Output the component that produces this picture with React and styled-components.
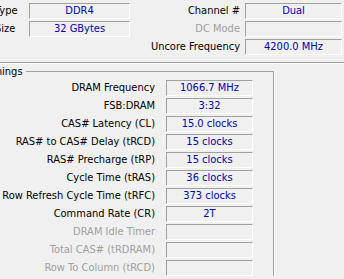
import styled, { createGlobalStyle } from "styled-components"

const GlobalStyle = createGlobalStyle`
    html, body {
        margin: 0;
        padding: 0;
        background: #f0f0f0;
        overflow: hidden;
    }
    body {
        font-family: "DejaVu Sans Condensed", "DejaVu Sans", sans-serif;
        font-stretch: condensed;
        font-size: 11px;
        color: #000000;
    }
`

const general = [
    { label: "Type", value: "DDR4", rightLabel: "Channel #", rightValue: "Dual" },
    { label: "Size", value: "32 GBytes", rightLabel: "DC Mode", rightValue: "", rightDisabled: true },
    { label: "", value: null, rightLabel: "Uncore Frequency", rightValue: "4200.0 MHz" },
]

const timings = [
    { label: "DRAM Frequency", value: "1066.7 MHz" },
    { label: "FSB:DRAM", value: "3:32" },
    { label: "CAS# Latency (CL)", value: "15.0 clocks" },
    { label: "RAS# to CAS# Delay (tRCD)", value: "15 clocks" },
    { label: "RAS# Precharge (tRP)", value: "15 clocks" },
    { label: "Cycle Time (tRAS)", value: "36 clocks" },
    { label: "Row Refresh Cycle Time (tRFC)", value: "373 clocks" },
    { label: "Command Rate (CR)", value: "2T" },
    { label: "DRAM Idle Timer", value: "", disabled: true },
    { label: "Total CAS# (tRDRAM)", value: "", disabled: true },
    { label: "Row To Column (tRCD)", value: "", disabled: true },
]

export default function App() {
    return (
        <>
            <GlobalStyle />
            <Window>
                <GeneralGrid>
                    {general.map((row) => (
                        <GeneralRow key={row.rightLabel}>
                            <Label $align="left">{row.label}</Label>
                            {row.value !== null ? <Field>{row.value}</Field> : <span />}
                            <Label $disabled={row.rightDisabled}>{row.rightLabel}</Label>
                            <Field>{row.rightValue}</Field>
                        </GeneralRow>
                    ))}
                </GeneralGrid>
                <Separator />
                <GroupBox>
                    <Legend>Timings</Legend>
                    <TimingGrid>
                        {timings.map((t) => (
                            <TimingRow key={t.label}>
                                <Label $disabled={t.disabled}>{t.label}</Label>
                                <Field>{t.value}</Field>
                            </TimingRow>
                        ))}
                    </TimingGrid>
                </GroupBox>
            </Window>
        </>
    )
}

const Window = styled.div`
    margin-left: -20px;
    width: 364px;
`
const GeneralGrid = styled.div`
    display: flex;
    flex-direction: column;
    gap: 2px;
    padding: 3px 2px 0 15px;
`
const GeneralRow = styled.div`
    display: grid;
    grid-template-columns: 34px 101px 1fr 97px;
    height: 16px;
    align-items: center;
`
const Label = styled.span`
    text-align: ${(props) => props.$align || "right"};
    padding-right: ${(props) => (props.$align === "left" ? "0" : "5px")};
    color: ${(props) => (props.$disabled ? "#a0a0a0" : "#000000")};
    white-space: nowrap;
    line-height: 16px;
`
const Field = styled.div`
    box-sizing: border-box;
    height: 16px;
    border-top: 1px solid #a0a0a0;
    border-left: 1px solid #a0a0a0;
    border-bottom: 1px solid #ffffff;
    border-right: 1px solid #ffffff;
    color: #0000b4;
    text-align: center;
    line-height: 14px;
    white-space: nowrap;
    overflow: hidden;
`
const Separator = styled.div`
    margin-top: 7px;
    border-top: 1px solid #a0a0a0;
    border-bottom: 1px solid #ffffff;
`
const GroupBox = styled.fieldset`
    box-sizing: border-box;
    width: 294px;
    margin: 1px 0 0;
    padding: 2px 20px 0 2px;
    border: none;
    border-top: 1px solid #a0a0a0;
    border-right: 1px solid #a0a0a0;
    box-shadow: 1px 0 0 #ffffff;
`
const Legend = styled.legend`
    padding: 0 3px 0 2px;
    line-height: 13px;
    color: #000000;
`
const TimingGrid = styled.div`
    display: flex;
    flex-direction: column;
    gap: 2px;
`
const TimingRow = styled.div`
    display: grid;
    grid-template-columns: 1fr 87px;
    column-gap: 6px;
    height: 16px;
    align-items: center;
`
